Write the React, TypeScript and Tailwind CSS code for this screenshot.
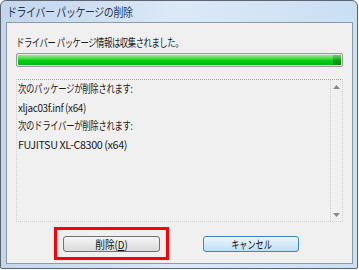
import React from "react"

const jp = { fontFamily: '"Noto Sans CJK JP", "Noto Sans", sans-serif' }

const App = () => {
  return (
    <div className="w-[359px] h-[270px] bg-white" style={jp}>
      {/* window frame */}
      <div className="w-[358px] h-[269px] rounded-t-[6px] rounded-b-[2px] border border-[#5d6670] bg-gradient-to-r from-[#c2d6ed] via-[#dbe9f7] to-[#cadff3] flex flex-col pl-[5px] pr-[4px] pb-[4px]">
        {/* title bar */}
        <div className="h-[21px] flex items-center pl-[1px] text-[12px] text-[#1f3550] tracking-[-0.5px]">
          <span className="inline-block origin-left scale-x-[0.83] whitespace-nowrap">ドライバー パッケージの削除</span>
        </div>

        {/* client area */}
        <div className="flex-1 border border-[#8e9aa6] bg-[#f0f0f0] flex flex-col pt-[12px] px-[9px] text-[11px] text-[#1a1a1a]">
          <p className="leading-[14px] tracking-[-0.6px] whitespace-nowrap">
            <span className="inline-block origin-left scale-x-[0.76]">ドライバー パッケージ情報は収集されました。</span>
          </p>

          {/* progress bar */}
          <div className="mt-[4px] h-[14px] rounded-[2px] border border-[#9a9a9a] bg-[#e6e6e6] p-[1px]">
            <div className="h-full w-full rounded-[1px] bg-gradient-to-b from-[#8fea8f] via-[#06d20c] to-[#00b81a] flex justify-end">
              <div className="w-[8px] h-full bg-gradient-to-b from-[#6fc96f] via-[#06a812] to-[#008a14]" />
            </div>
          </div>

          {/* list */}
          <div className="mt-[12px] h-[143px] border-t border-t-[#a3a3a3] border-x border-b border-dotted border-x-[#cfcfcf] border-b-[#cfcfcf] flex">
            <div className="flex-1 flex flex-col gap-[4.5px] pt-[1px] pl-[1px] leading-[14px] tracking-[-0.4px] whitespace-nowrap">
              <p><span className="inline-block origin-left scale-x-[0.76]">次のパッケージが削除されます:</span></p>
              <p><span className="inline-block origin-left scale-x-[0.9]">xljac03f.inf (x64)</span></p>
              <p><span className="inline-block origin-left scale-x-[0.76]">次のドライバーが削除されます:</span></p>
              <p><span className="inline-block origin-left scale-x-[0.98]">FUJITSU XL-C8300 (x64)</span></p>
            </div>
            <div className="w-[12px] border-l border-dotted border-l-[#cfcfcf] flex flex-col items-center justify-between pt-[5px] pb-[4px]">
              <svg width="7" height="4" viewBox="0 0 7 4"><polygon points="3.5,0 7,4 0,4" fill="#8a8a8a" /></svg>
              <svg width="7" height="4" viewBox="0 0 7 4"><polygon points="0,0 7,0 3.5,4" fill="#8a8a8a" /></svg>
            </div>
          </div>

          {/* buttons */}
          <div className="mt-[5px] flex items-start">
            <div className="ml-[38px] border-[3px] border-[#ff0000] pt-[6px] pb-[4px] px-[6px]">
              <button className="w-[97px] h-[16px] rounded-[3px] border border-[#707070] bg-gradient-to-b from-[#f6f6f6] to-[#dadada] text-[11px] leading-[14px] text-[#111]">
                <span className="inline-block scale-x-[0.88]">削除(<span className="underline">D</span>)</span>
              </button>
            </div>
            <button className="ml-[34px] mt-[9px] w-[96px] h-[16px] rounded-[3px] border border-[#3c86be] bg-gradient-to-b from-[#eaf6fd] to-[#bfe0f4] text-[11px] leading-[14px] text-[#111]">
              <span className="inline-block scale-x-[0.74]">キャンセル</span>
            </button>
          </div>
        </div>
      </div>
    </div>
  )
}

export default App
